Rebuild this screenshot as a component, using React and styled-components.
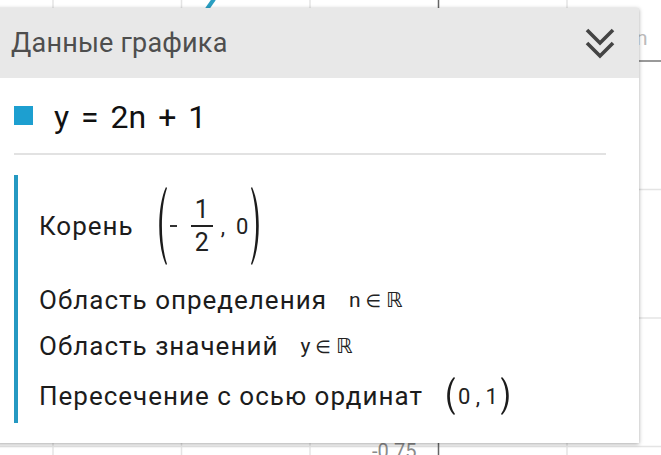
import React from 'react';
import styled, { createGlobalStyle } from 'styled-components';

const GlobalStyle = createGlobalStyle`
  html, body {
    margin: 0;
    padding: 0;
    background: #fff;
  }
  body {
    font-family: Roboto, "Noto Sans", sans-serif;
  }
`;

const Screen = styled.div`
  position: relative;
  width: 661px;
  height: 455px;
  overflow: hidden;
  background: #fff;
`;

const Canvas = styled.svg`
  position: absolute;
  left: 0;
  top: 0;
`;

const Panel = styled.section`
  position: absolute;
  left: -4px;
  top: 8px;
  width: 643px;
  height: 435px;
  background: #fff;
  box-shadow: 0 1px 4px rgba(0, 0, 0, 0.35);
  display: flex;
  flex-direction: column;
`;

const Header = styled.header`
  height: 70px;
  flex: none;
  background: #e8e8e8;
  display: flex;
  align-items: center;
  justify-content: space-between;
  padding: 0 24px 0 15px;
`;

const Title = styled.h2`
  margin: 0;
  font-weight: 400;
  font-size: 27px;
  color: #4e4e4e;
  letter-spacing: 0.2px;
`;

const Body = styled.div`
  padding: 0 33px 0 18px;
`;

const Equation = styled.div`
  display: flex;
  align-items: center;
  gap: 21px;
  height: 77px;
  padding-top: 3px;
  font-size: 32px;
  color: #111;
  border-bottom: 2px solid #e2e2e2;
  box-sizing: border-box;
  word-spacing: 4px;
`;

const Swatch = styled.span`
  width: 19px;
  height: 19px;
  margin-top: -3px;
  background: ${p => p.color};
  flex: none;
`;

const Details = styled.div`
  margin-top: 20px;
  border-left: 4px solid #2599c2;
  padding: 11px 0 5px 21px;
  display: flex;
  flex-direction: column;
`;

const Row = styled.div`
  display: flex;
  align-items: center;
  height: ${p => p.h}px;
  margin-top: ${p => p.gap || 0}px;
  font-size: 26px;
  letter-spacing: 1px;
  color: #1c1c1c;
`;

const Label = styled.span`
  margin-right: ${p => p.space}px;
`;

const MathText = styled.span`
  display: inline-flex;
  align-items: center;
  font-size: ${p => p.size || 21}px;
  letter-spacing: 0;
  color: #222;
  gap: ${p => p.gap ?? 5}px;
  margin: 0 ${p => p.pad || 0}px;
`;

const Sym = styled.span`
  font-family: "DejaVu Sans", sans-serif;
  font-size: ${p => p.big ? 1 : 0.85}em;
`;

const Minus = styled.span`
  width: 7px;
  height: 2px;
  background: #333;
  margin-right: 9px;
`;

const Frac = styled.span`
  display: inline-flex;
  flex-direction: column;
  align-items: center;
  font-size: 25px;
  line-height: 28px;
  margin-right: 3px;
`;

const FracBar = styled.span`
  width: 22px;
  height: 2px;
  margin: 1px 0 2px;
  background: #222;
`;

const Paren = ({ h, flip }) => (
  <svg width="12" height={h} viewBox={`0 0 12 ${h}`} style={{ transform: flip ? 'scaleX(-1)' : undefined, flex: 'none' }}>
    <path
      d={`M11 1 C2 ${h * 0.25} 2 ${h * 0.75} 11 ${h - 1} L12 ${h - 2} C5.2 ${h * 0.72} 5.2 ${h * 0.28} 12 2 Z`}
      fill="#1c1c1c"
    />
  </svg>
);

const ChevronsDown = () => (
  <svg width="30" height="31" viewBox="0 0 30 31" fill="none" stroke="#444" strokeWidth="3.6" strokeLinecap="butt" strokeLinejoin="miter">
    <path d="M2 2 L15 15 L28 2" />
    <path d="M2 15 L15 28 L28 15" />
  </svg>
);

const GraphBackground = () => {
  const xs = [53, 181.5, 310, 567];
  const ys = [189.5, 318, 446.5];
  return (
    <Canvas width="661" height="455">
      {xs.map(x => <line key={x} x1={x} x2={x} y1="0" y2="455" stroke="#e4e4e4" strokeWidth="1.5" />)}
      {ys.map(y => <line key={y} x1="0" x2="661" y1={y} y2={y} stroke="#e4e4e4" strokeWidth="1.5" />)}
      <line x1="438.5" x2="438.5" y1="0" y2="455" stroke="#666" strokeWidth="1.5" />
      <line x1="0" x2="661" y1="61" y2="61" stroke="#777" strokeWidth="1.5" />
      <line x1="214" y1="-1" x2="207" y2="9" stroke="#2a9fc2" strokeWidth="4" />
      <text x="636" y="45" fontFamily="Roboto, sans-serif" fontSize="21" fill="#bbb">n</text>
      <text x="372" y="458" fontFamily="Roboto, sans-serif" fontSize="20" fill="#8a8a8a">-0.75</text>
    </Canvas>
  );
};

const App = () => {
  return (
    <Screen>
      <GlobalStyle />
      <GraphBackground />
      <Panel>
        <Header>
          <Title>Данные графика</Title>
          <ChevronsDown />
        </Header>
        <Body>
          <Equation>
            <Swatch color="#1d9fd0" />
            <span>y = 2n + 1</span>
          </Equation>
          <Details>
            <Row h={80}>
              <Label space={21}>Корень</Label>
              <Paren h={80} />
              <MathText size={22} gap={5} pad={3}>
                <Minus />
                <Frac>
                  <span>1</span>
                  <FracBar />
                  <span>2</span>
                </Frac>
                <span>,&nbsp;&nbsp;0</span>
              </MathText>
              <Paren h={80} flip />
            </Row>
            <Row h={36} gap={16}>
              <Label space={22}>Область определения</Label>
              <MathText>n<Sym>∈</Sym><Sym big>ℝ</Sym></MathText>
            </Row>
            <Row h={36} gap={10}>
              <Label space={22}>Область значений</Label>
              <MathText>y<Sym>∈</Sym><Sym big>ℝ</Sym></MathText>
            </Row>
            <Row h={44} gap={10}>
              <Label space={20}>Пересечение с осью ординат</Label>
              <Paren h={40} />
              <MathText size={22} pad={3}>0&nbsp;,&nbsp;1</MathText>
              <Paren h={40} flip />
            </Row>
          </Details>
        </Body>
      </Panel>
    </Screen>
  );
};

export default App;
